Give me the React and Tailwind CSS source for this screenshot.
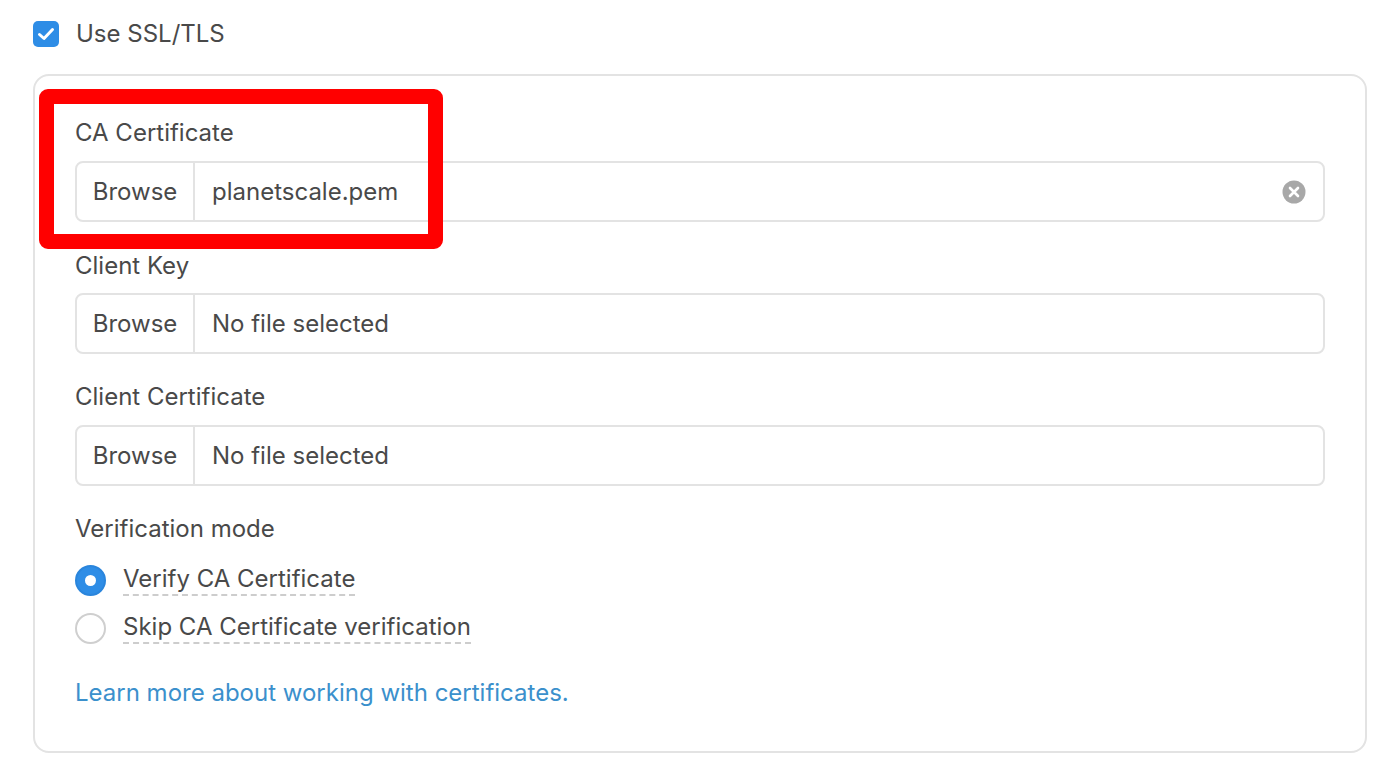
import React from "react";

function FileInput({ value, clear }) {
  return (
    <div className="flex h-[61px] items-stretch rounded-[8px] border-2 border-[#e3e3e3] bg-white">
      <div className="flex w-[118px] shrink-0 items-center justify-center border-r-2 border-[#e3e3e3] text-[#494949]">
        Browse
      </div>
      <div className="flex flex-1 items-center pl-[17px] pr-[17px] text-[#494949]">
        <span className="flex-1">{value}</span>
        {clear && (
          <svg width="24" height="24" viewBox="0 0 24 24">
            <circle cx="12" cy="12" r="11.5" fill="#a8a8a8" />
            <path d="M8 8 L16 16 M16 8 L8 16" stroke="#fff" strokeWidth="2.6" strokeLinecap="round" />
          </svg>
        )}
      </div>
    </div>
  );
}

function Radio({ checked, label }) {
  return (
    <div className="flex h-[48px] items-center">
      {checked ? (
        <div className="flex h-[31px] w-[31px] items-center justify-center rounded-full border-2 border-[#2a85dc] bg-[#2e8de6]">
          <div className="h-[11px] w-[11px] rounded-full bg-white" />
        </div>
      ) : (
        <div className="h-[31px] w-[31px] rounded-full border-2 border-[#cfcfcf] bg-white" />
      )}
      <span className="ml-[17px] border-b-2 border-dashed border-[#cdcdcd] leading-[30px] text-[#494949]">
        {label}
      </span>
    </div>
  );
}

export default function App() {
  return (
    <div
      className="min-h-[774px] w-[1386px] bg-white text-[24px]"
      style={{ fontFamily: "Inter, 'Noto Sans', sans-serif" }}
    >
      <div className="pl-[33px] pr-[19px] pt-[21px]">
        <div className="flex items-center">
          <div className="flex h-[26px] w-[26px] items-center justify-center rounded-[5px] bg-[#2e8de6]">
            <svg width="26" height="26" viewBox="0 0 26 26">
              <path d="M6.5 13.5 L11 17.5 L19.5 8.5" stroke="#fff" strokeWidth="3" fill="none" strokeLinecap="round" strokeLinejoin="round" />
            </svg>
          </div>
          <span className="ml-[17px] leading-[26px] text-[#494949]">Use SSL/TLS</span>
        </div>

        <div className="relative mt-[27px] rounded-[16px] border-2 border-[#e3e3e3] px-[40px] pb-[44px] pt-[43px]">
          <div className="flex flex-col">
            <div className="leading-[28px] text-[#494949]">CA Certificate</div>
            <div className="mt-[14px]">
              <FileInput value="planetscale.pem" clear />
            </div>

            <div className="mt-[30px] leading-[28px] text-[#494949]">Client Key</div>
            <div className="mt-[13px]">
              <FileInput value="No file selected" />
            </div>

            <div className="mt-[29px] leading-[28px] text-[#494949]">Client Certificate</div>
            <div className="mt-[14px]">
              <FileInput value="No file selected" />
            </div>

            <div className="mt-[29px] leading-[28px] text-[#494949]">Verification mode</div>
            <div className="mt-[13px] flex flex-col">
              <Radio checked label="Verify CA Certificate" />
              <Radio label="Skip CA Certificate verification" />
            </div>

            <div className="mt-[27px] leading-[28px] text-[#3b90cc]">
              Learn more about working with certificates.
            </div>
          </div>

          <div className="absolute left-[4px] top-[13px] h-[160px] w-[404px] rounded-[9px] border-[15px] border-[#ff0000]" />
        </div>
      </div>
    </div>
  );
}
